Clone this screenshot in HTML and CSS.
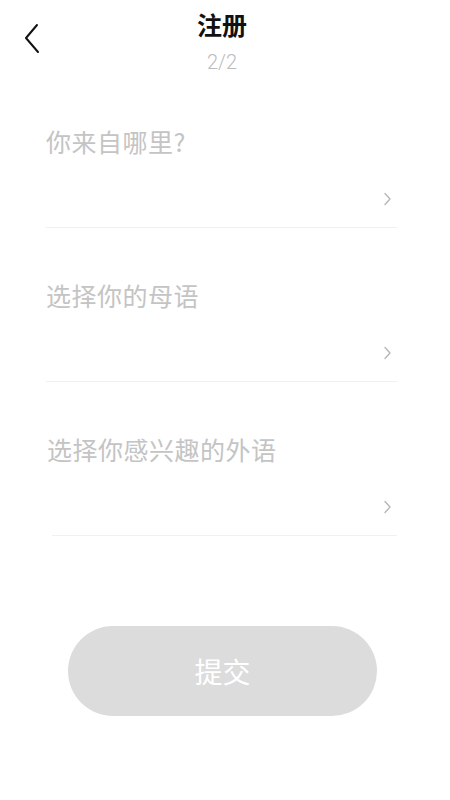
FILE: index.html
```html
<!DOCTYPE html>
<html lang="zh-CN">
<head>
<meta charset="utf-8">
<title>注册</title>
<link rel="stylesheet" href="styles.css">
</head>
<body>
<div class="page">
  <header class="header">
    <button class="back" aria-label="返回">
      <svg width="16" height="32" viewBox="0 0 16 32"><polyline points="13,2 2,15 14,29" fill="none" stroke="#111" stroke-width="2" stroke-linecap="round" stroke-linejoin="round"/></svg>
    </button>
    <div class="title">注册</div>
    <div class="step">2/2</div>
  </header>
  <main class="form">
    <div class="field">
      <div class="label">你来自哪里?</div>
      <div class="row"><svg class="chev" width="9" height="14" viewBox="0 0 9 14"><polyline points="2,1.5 7,7 2,12.5" fill="none" stroke="#b5b5b5" stroke-width="1.3" stroke-linecap="round" stroke-linejoin="round"/></svg></div>
    </div>
    <div class="field">
      <div class="label">选择你的母语</div>
      <div class="row"><svg class="chev" width="9" height="14" viewBox="0 0 9 14"><polyline points="2,1.5 7,7 2,12.5" fill="none" stroke="#b5b5b5" stroke-width="1.3" stroke-linecap="round" stroke-linejoin="round"/></svg></div>
    </div>
    <div class="field field-last">
      <div class="label">选择你感兴趣的外语</div>
      <div class="row"><svg class="chev" width="9" height="14" viewBox="0 0 9 14"><polyline points="2,1.5 7,7 2,12.5" fill="none" stroke="#b5b5b5" stroke-width="1.3" stroke-linecap="round" stroke-linejoin="round"/></svg></div>
    </div>
    <button class="submit">提交</button>
  </main>
</div>
</body>
</html>
```
FILE: styles.css
```css
html, body {
  margin: 0;
  padding: 0;
  background: #fff;
}
body {
  font-family: "Noto Sans CJK SC", "Noto Sans", sans-serif;
  width: 450px;
  height: 800px;
  overflow: hidden;
}
.page {
  display: flex;
  flex-direction: column;
}
.header {
  position: relative;
  display: flex;
  flex-direction: column;
  align-items: center;
  padding: 9px 6px 0 0;
  height: 66px;
}
.back {
  position: absolute;
  left: 24px;
  top: 23px;
  padding: 0;
  border: 0;
  background: none;
  line-height: 0;
}
.title {
  font-size: 25px;
  font-weight: 700;
  line-height: 30px;
  color: #111;
}
.step {
  margin-top: 11px;
  font-size: 20px;
  line-height: 24px;
  color: #bcbcbc;
  font-family: "Roboto", "Noto Sans", sans-serif;
  font-weight: 300;
}
.form {
  display: flex;
  flex-direction: column;
  padding-top: 51px;
}
.field {
  margin: 0 53px 52px 46px;
  border-bottom: 1px solid #f0f0f0;
  padding-bottom: 8px;
}
.field-last {
  margin-left: 52px;
  margin-bottom: 0;
}
.field-last .label {
  margin-left: -5px;
}
.label {
  font-size: 25px;
  line-height: 30px;
  color: #c4c4c4;
  letter-spacing: 0.5px;
}
.row {
  margin-top: 23px;
  height: 40px;
  display: flex;
  align-items: center;
  justify-content: flex-end;
  padding-right: 5px;
}
.submit {
  align-self: flex-start;
  margin: 90px 0 0 68px;
  width: 309px;
  height: 90px;
  border: 0;
  border-radius: 45px;
  background: #dcdcdc;
  color: #fff;
  font-family: "Noto Sans CJK SC", sans-serif;
  font-size: 28px;
  padding: 0;
}
```
